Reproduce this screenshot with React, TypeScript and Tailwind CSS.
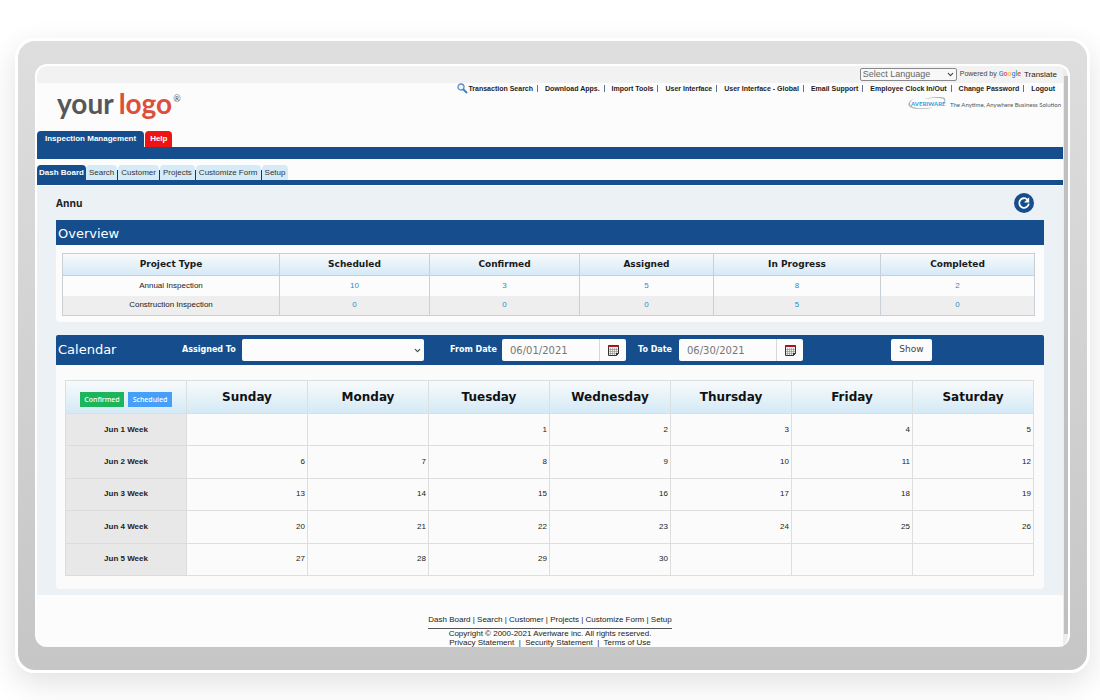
import { useState } from "react";
import { ChevronDown } from "lucide-react";

const topLinks = [
    "Transaction Search",
    "Download Apps.",
    "Import Tools",
    "User Interface",
    "User Interface - Global",
    "Email Support",
    "Employee Clock In/Out",
    "Change Password",
    "Logout",
];

const subTabs = ["Search", "Customer", "Projects", "Customize Form", "Setup"];

const columns = [
    { name: "Project Type", width: "w-[217px]" },
    { name: "Scheduled", width: "w-[150px]" },
    { name: "Confirmed", width: "w-[150px]" },
    { name: "Assigned", width: "w-[134px]" },
    { name: "In Progress", width: "w-[167px]" },
    { name: "Completed", width: "w-[154px]" },
];

const overview = [
    { type: "Annual Inspection", counts: [10, 3, 5, 8, 2] },
    { type: "Construction Inspection", counts: [0, 0, 0, 5, 0] },
];

const days = ["Sunday", "Monday", "Tuesday", "Wednesday", "Thursday", "Friday", "Saturday"];

// June 2021 starts on a Tuesday
const weeks = [0, 1, 2, 3, 4].map((w) =>
    days.map((_, d) => {
        const day = w * 7 + d - 1;
        return day >= 1 && day <= 30 ? day : null;
    })
);

function SearchIcon() {
    return (
        <svg viewBox="0 0 11 11" className="w-[11px] h-[11px]" aria-hidden="true">
            <circle cx="4" cy="4" r="3" fill="#eef5fc" stroke="#5b8bc9" strokeWidth="1.3" />
            <path d="M6.2 6.2 L10 10" stroke="#4a7fc4" strokeWidth="2" />
        </svg>
    );
}

function CalendarIcon() {
    return (
        <svg viewBox="0 0 11 11" className="w-[11px] h-[11px]" aria-hidden="true">
            <path d="M0.5 0.5 H10.5 V8.5 L8.5 10.5 H0.5 Z" fill="#f2f2f2" stroke="#333333" />
            <path d="M0 1.2 H11" stroke="#a81e1e" strokeWidth="1.6" />
            <path
                d="M1 4.5 H10 M1 6.5 H10 M1 8.5 H9 M2.5 3 V10 M4.5 3 V10 M6.5 3 V10 M8.5 3 V10"
                stroke="#8c8c8c"
                strokeWidth="0.6"
            />
            <path d="M8 11 V8 H11 Z" fill="#333333" />
        </svg>
    );
}

function RefreshIcon() {
    return (
        <svg viewBox="0 0 20 20" className="w-5 h-5" aria-hidden="true">
            <circle cx="10" cy="10" r="10" fill="#164e8d" />
            <path d="M13.4 6.6 A4.8 4.8 0 1 0 14.8 10.6" fill="none" stroke="#ffffff" strokeWidth="1.8" />
            <path d="M15.2 4.2 V9.4 H10 Z" fill="#ffffff" />
        </svg>
    );
}

function AveriwareLogo() {
    return (
        <svg viewBox="0 0 40 16" className="w-10 h-4" role="img" aria-label="Averiware">
            <path d="M7 2.8 C1 5 -1 10 5 12 C10 14 20 13 26 11.5 C18 12.6 10 12.6 6 11 C1 9 3 5 7 2.8 Z" fill="#b4b4b4" />
            <path d="M14 3.4 C24 0.6 36 0 38 2.4 C39 4 38 5.5 36.5 6.5 C37.5 4.5 37.5 3 35 2.4 C30 1.4 22 2 14 3.4 Z" fill="#b4b4b4" />
            <text x="4" y="10" fontSize="6" fontWeight="700" fontFamily="Lato, sans-serif" fill="#2e9fd6">
                AVERIWARE
            </text>
        </svg>
    );
}

function DateField({ id, value, onChange }: { id: string; value: string; onChange: (v: string) => void }) {
    return (
        <div className="flex w-[124px] h-[22px] rounded-xs bg-[#fcfcfc] overflow-hidden">
            <input
                id={id}
                type="text"
                value={value}
                onChange={(e) => onChange(e.target.value)}
                className="flex-1 min-w-0 pl-2 text-[10px] font-normal text-[#777777] outline-none"
            />
            <button
                type="button"
                aria-label="Pick a date"
                className="w-[27px] flex items-center justify-center border-l border-[#d8d8d8]"
            >
                <CalendarIcon />
            </button>
        </div>
    );
}

function Header() {
    return (
        <header className="font-['Liberation_Sans',Arial,sans-serif]">
            <div className="h-[17px] bg-[#f2f2f2] flex items-center justify-end gap-[3px] pr-[6px]">
                <div className="relative">
                    <select
                        aria-label="Select Language"
                        className="block appearance-none w-[97px] h-[13px] pl-[2px] border border-[#888888] rounded-xs bg-[#f8f8f8] text-[9px] leading-[11px] text-[#666666]"
                    >
                        <option>Select Language</option>
                    </select>
                    <ChevronDown
                        size={9}
                        strokeWidth={3}
                        className="absolute right-[2px] top-[2px] text-[#444444] pointer-events-none"
                    />
                </div>
                <span className="text-[7px] text-[#444444]">
                    Powered by{" "}
                    <span className="font-['Roboto',sans-serif] font-medium">
                        <span className="text-[#4285f4]">G</span>
                        <span className="text-[#ea4335]">o</span>
                        <span className="text-[#fbbc05]">o</span>
                        <span className="text-[#4285f4]">g</span>
                        <span className="text-[#34a853]">l</span>
                        <span className="text-[#ea4335]">e</span>
                    </span>
                </span>
                <a href="#translate" className="text-[8px] text-[#222222]">
                    Translate
                </a>
            </div>

            <div className="h-12 flex justify-between">
                <a
                    href="#home"
                    className="flex items-start pl-5 pt-[2px] text-[28px] leading-9 font-bold font-['Lato',sans-serif] text-[#555759]"
                >
                    <span>your</span>
                    <span className="ml-[5px] text-[#dd4f3b]">logo</span>
                    <span className="mt-2 ml-px text-[9px] leading-3 font-normal">®</span>
                </a>
                <div className="flex flex-col items-end">
                    <nav className="flex items-center h-[11px] pr-2 text-[7px] leading-[11px] font-bold text-[#1c1c1c]">
                        <SearchIcon />
                        {topLinks.map((link, i) => (
                            <div key={link} className="flex items-center">
                                {i > 0 && <span className="w-px h-[7px] ml-1 mr-[7px] bg-[#5d7391]" />}
                                <a href="#top">{link}</a>
                            </div>
                        ))}
                    </nav>
                    <div className="flex items-center gap-[3px] mt-[2px] pr-[2px]">
                        <AveriwareLogo />
                        <span className="text-[6px] font-['Lato',sans-serif] text-[#555555]">
                            The Anytime, Anywhere Business Solution
                        </span>
                    </div>
                </div>
            </div>

            <nav className="flex gap-px text-[8px] leading-4 font-bold text-white">
                <a href="#inspection" className="pl-2 pr-[8px] rounded-t bg-[#164e8d]">
                    Inspection Management
                </a>
                <a href="#help" className="px-[5px] rounded-t bg-[#ee1414]">
                    Help
                </a>
            </nav>
            <div className="h-3 bg-[#164e8d]" />

            <nav className="flex mt-[6px] text-[8px] leading-[15px] text-[#333333]">
                <a href="#dashboard" className="px-[2px] rounded-t bg-[#164e8d] font-bold text-white">
                    Dash Board
                </a>
                {subTabs.map((tab, i) => (
                    <div key={tab} className="flex items-end">
                        {i > 0 && <span className="w-px h-[10px] bg-[#333333]" />}
                        <a href="#tab" className="px-[3px] rounded-t bg-[#d5ebf8]">
                            {tab}
                        </a>
                    </div>
                ))}
            </nav>
            <div className="h-[6px] bg-[#164e8d] border-b border-white" />
        </header>
    );
}

function Overview() {
    return (
        <section className="bg-[#fcfcfc] rounded-b-sm">
            <h2 className="pl-[2px] pt-[2px] bg-[#164e8d] text-[13px] leading-[23px] text-white">Overview</h2>
            <div className="pt-2 pb-[6px] pl-[6px] pr-[10px]">
                <table className="w-full table-fixed border-collapse text-center text-[8px] border border-[#c9cfd6]">
                    <thead>
                        <tr className="h-[22px] bg-linear-to-b from-[#f8fafb] to-[#d3e9f6] text-[9px] text-[#1a1a1a]">
                            {columns.map((c) => (
                                <th key={c.name} className={`${c.width} p-0 border border-[#c9cfd6]`}>
                                    {c.name}
                                </th>
                            ))}
                        </tr>
                    </thead>
                    <tbody className="font-['Liberation_Sans',Arial,sans-serif]">
                        {overview.map((row) => (
                            <tr key={row.type} className="h-5 even:bg-[#eeeeee]">
                                <td className="p-0 border-x border-[#c9cfd6] text-[#222222]">{row.type}</td>
                                {row.counts.map((n, i) => (
                                    <td key={i} className="p-0 border-x border-[#c9cfd6]">
                                        <a href="#list" className="text-[#2f8cc0]">
                                            {n}
                                        </a>
                                    </td>
                                ))}
                            </tr>
                        ))}
                    </tbody>
                </table>
            </div>
        </section>
    );
}

function Calendar() {
    const [from, setFrom] = useState("06/01/2021");
    const [to, setTo] = useState("06/30/2021");

    return (
        <section className="mt-[13px] bg-[#fbfbfb] rounded-sm">
            <form
                onSubmit={(e) => e.preventDefault()}
                className="flex items-center h-[30px] pl-[2px] rounded-t-xs bg-[#164e8d] text-[8px] font-bold text-white"
            >
                <h2 className="w-[124px] text-[13px] font-normal">Calendar</h2>
                <label htmlFor="assigned" className="w-[60px]">
                    Assigned To
                </label>
                <div className="relative w-[182px]">
                    <select
                        id="assigned"
                        className="block appearance-none w-full h-[22px] pl-2 rounded-xs bg-[#fcfcfc] text-[10px] font-normal text-[#777777]"
                    >
                        <option></option>
                    </select>
                    <ChevronDown
                        size={9}
                        strokeWidth={3}
                        className="absolute right-[2px] top-[7px] text-[#444444] pointer-events-none"
                    />
                </div>
                <label htmlFor="from" className="ml-[26px] w-[52px]">
                    From Date
                </label>
                <DateField id="from" value={from} onChange={setFrom} />
                <label htmlFor="to" className="ml-3 w-[41px] whitespace-nowrap">
                    To Date
                </label>
                <DateField id="to" value={to} onChange={setTo} />
                <button
                    type="submit"
                    className="ml-[88px] w-[41px] h-[22px] rounded-xs bg-[#fcfcfc] text-[9px] font-normal text-[#444444]"
                >
                    Show
                </button>
            </form>
            <div className="pt-[15px] pb-[13px] pl-[9px] pr-[10px]">
                <table className="w-full h-[196px] table-fixed border-collapse">
                    <thead>
                        <tr className="h-[33px] bg-linear-to-b from-[#f8fafb] to-[#d3e9f6] text-[12px] text-[#111111]">
                            <th className="p-0 border border-[#dcdfe2]">
                                <div className="flex justify-center gap-1 pt-1 text-[7px] leading-[15px] font-medium font-['Noto_Sans',sans-serif] text-white">
                                    <span className="w-11 bg-[#1cb55c]">Confirmed</span>
                                    <span className="w-11 bg-[#47a0f8]">Scheduled</span>
                                </div>
                            </th>
                            {days.map((d) => (
                                <th key={d} className="p-0 border border-[#dcdfe2]">
                                    {d}
                                </th>
                            ))}
                        </tr>
                    </thead>
                    <tbody className="font-['Liberation_Sans',Arial,sans-serif] text-[8px] text-[#222222]">
                        {weeks.map((week, w) => (
                            <tr key={w}>
                                <th className="p-0 border border-[#dcdcdc] bg-[#e8e8e8]">Jun {w + 1} Week</th>
                                {week.map((day, d) => (
                                    <td key={d} className="p-0 pr-[2px] border border-[#dedede] text-right">
                                        {day}
                                    </td>
                                ))}
                            </tr>
                        ))}
                    </tbody>
                </table>
            </div>
        </section>
    );
}

function Footer() {
    return (
        <footer className="flex flex-col items-center pt-5 text-[8px] leading-[9px] text-[#222222] font-['Liberation_Sans',Arial,sans-serif]">
            <nav className="flex pb-[3px] leading-[10px] border-b border-[#555555]">
                {["Dash Board", ...subTabs].map((item, i) => (
                    <span key={item} className="whitespace-pre">
                        {i > 0 && " | "}
                        <a href="#tab">{item}</a>
                    </span>
                ))}
            </nav>
            <p>Copyright © 2000-2021 Averiware inc. All rights reserved.</p>
            <p className="whitespace-pre">
                <a href="#privacy">Privacy Statement</a>
                {"  |  "}
                <a href="#security">Security Statement</a>
                {"  |  "}
                <a href="#terms">Terms of Use</a>
            </p>
        </footer>
    );
}

export default function App() {
    return (
        <div className="min-h-screen overflow-hidden bg-white pt-[38px] pb-[27px] pl-[15px] pr-[10px] font-['DejaVu_Sans',Verdana,sans-serif]">
            <div className="border-[3px] border-white rounded-[20px] bg-linear-to-b from-[#dedede] to-[#c6c6c6] px-[17px] py-[23px] shadow-[0_10px_30px_rgba(0,0,0,0.12)]">
                <div className="flex rounded-xl border-2 border-b-0 border-white bg-[#fcfcfc] overflow-hidden">
                    <div className="flex-1 min-w-0">
                        <Header />
                        <main className="bg-[#ecf1f5] px-[19px] pb-[6px]">
                            <div className="h-[34px] flex items-center justify-between pr-[10px]">
                                <h1 className="text-[10px] font-bold font-['Noto_Sans',sans-serif] text-[#222222]">
                                    Annu
                                </h1>
                                <button type="button" aria-label="Refresh">
                                    <RefreshIcon />
                                </button>
                            </div>
                            <Overview />
                            <Calendar />
                        </main>
                        <Footer />
                    </div>
                    <div className="w-[5px] pt-[10px] pb-[13px] pl-px flex bg-[#ececec]">
                        <div className="flex-1 bg-[#c0c0c0]" />
                    </div>
                </div>
            </div>
        </div>
    );
}
